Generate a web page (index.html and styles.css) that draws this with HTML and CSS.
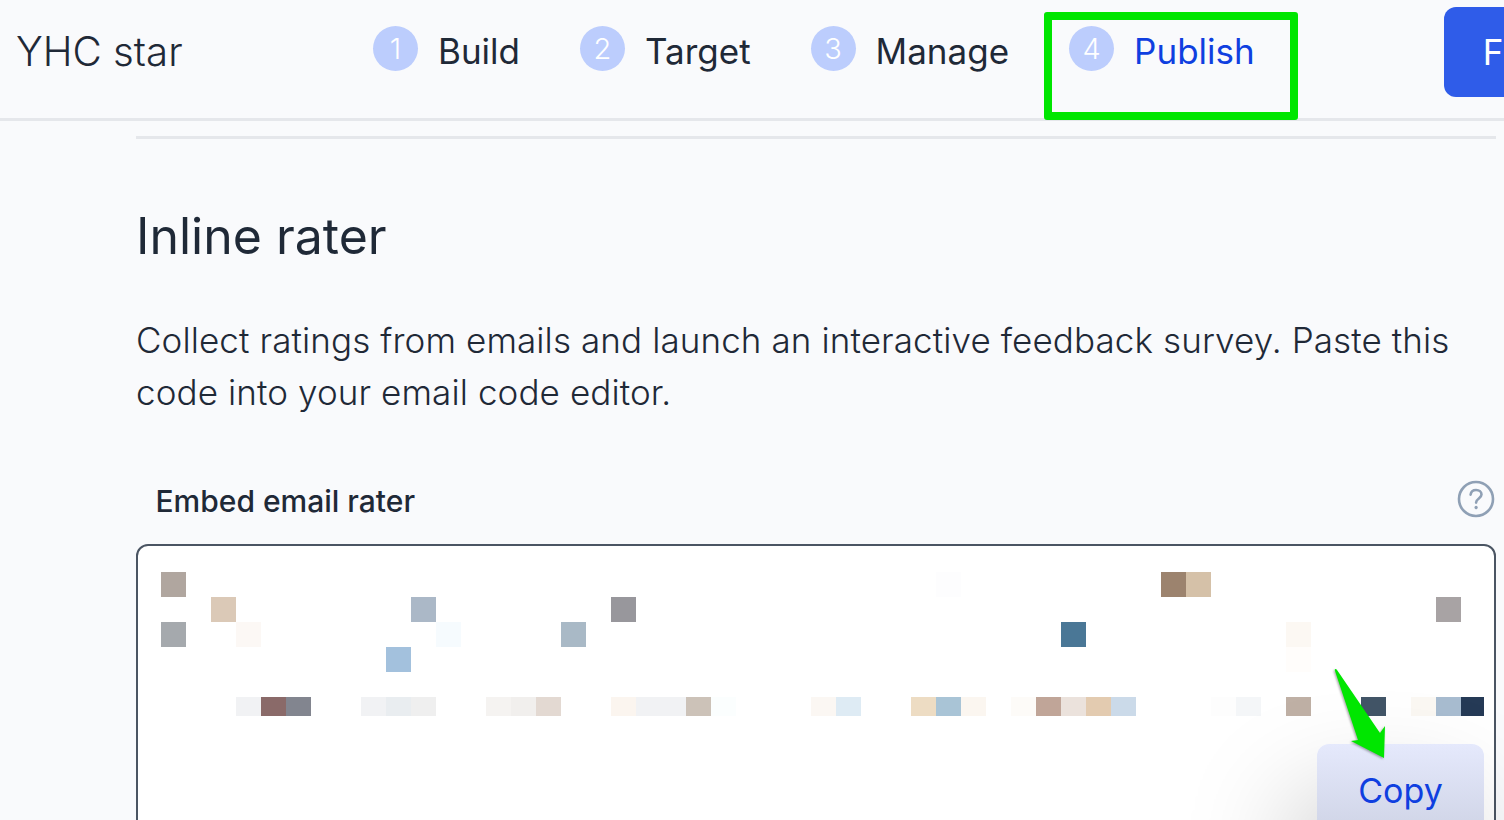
FILE: index.html
```html
<!DOCTYPE html>
<html lang="en">
<head>
<meta charset="utf-8">
<title>Inline rater</title>
<link rel="stylesheet" href="styles.css">
</head>
<body>
<header class="topbar">
  <div class="survey-name">YHC star</div>
  <nav class="steps">
    <a class="step"><span class="step-num">1</span><span class="step-label">Build</span></a>
    <a class="step"><span class="step-num">2</span><span class="step-label">Target</span></a>
    <a class="step"><span class="step-num">3</span><span class="step-label">Manage</span></a>
    <a class="step step-active"><span class="step-num">4</span><span class="step-label">Publish</span></a>
  </nav>
  <button class="finish">F</button>
</header>
<div class="highlight-box"></div>
<main class="content">
  <div class="rule"></div>
  <h1 class="title">Inline rater</h1>
  <p class="desc">Collect ratings from emails and launch an interactive feedback survey. Paste this code into your email code editor.</p>
  <div class="field-head">
    <span class="field-label">Embed email rater</span>
    <svg class="help" width="38" height="38" viewBox="0 0 38 38" fill="none" stroke="#8fa0b5" stroke-width="2.6" stroke-linecap="round" stroke-linejoin="round"><circle cx="19" cy="19" r="17"/><path d="M13.6 14.6c.4-3 2.700-4.600 5.500-4.600 3.100 0 5.400 1.900 5.400 4.600 0 3.800-5.400 4-5.400 8"/><path d="M19.100 27.400v.2" stroke-width="3.200"/></svg>
  </div>
  <div class="code-box">
    <div class="mosaic">
      <i style="grid-area:1/1;background:#b0a69f"></i>
      <i style="grid-area:1/32;background:#fdfdfe"></i>
      <i style="grid-area:1/41;background:#9c836e"></i>
      <i style="grid-area:1/42;background:#d5c1a8"></i>
      <i style="grid-area:2/3;background:#dbc9b7"></i>
      <i style="grid-area:2/11;background:#abb8c7"></i>
      <i style="grid-area:2/19;background:#98979c"></i>
      <i style="grid-area:2/52;background:#a8a3a4"></i>
      <i style="grid-area:3/1;background:#a5a9ad"></i>
      <i style="grid-area:3/4;background:#fcf8f5"></i>
      <i style="grid-area:3/12;background:#f6fbfe"></i>
      <i style="grid-area:3/17;background:#a9b9c6"></i>
      <i style="grid-area:3/37;background:#4a7796"></i>
      <i style="grid-area:3/46;background:#fcf8f3"></i>
      <i style="grid-area:4/10;background:#a3c1dd"></i>
      <i style="grid-area:4/46;background:#fffdfb"></i>
      <i style="grid-area:6/4;background:#f1f2f4"></i>
      <i style="grid-area:6/5;background:#8a6a69"></i>
      <i style="grid-area:6/6;background:#82858f"></i>
      <i style="grid-area:6/9;background:#f1f2f4"></i>
      <i style="grid-area:6/10;background:#e9edf0"></i>
      <i style="grid-area:6/11;background:#efefef"></i>
      <i style="grid-area:6/14;background:#f5f3f1"></i>
      <i style="grid-area:6/15;background:#f1efed"></i>
      <i style="grid-area:6/16;background:#e3d9d2"></i>
      <i style="grid-area:6/19;background:#fbf5ef"></i>
      <i style="grid-area:6/20;background:#f1f2f4"></i>
      <i style="grid-area:6/21;background:#f1f2f4"></i>
      <i style="grid-area:6/22;background:#ccc2b8"></i>
      <i style="grid-area:6/23;background:#fbfefe"></i>
      <i style="grid-area:6/27;background:#fbf7f3"></i>
      <i style="grid-area:6/28;background:#deebf4"></i>
      <i style="grid-area:6/31;background:#eddcc3"></i>
      <i style="grid-area:6/32;background:#a9c4d6"></i>
      <i style="grid-area:6/33;background:#fbf6f0"></i>
      <i style="grid-area:6/35;background:#fdfbf8"></i>
      <i style="grid-area:6/36;background:#c0a598"></i>
      <i style="grid-area:6/37;background:#ebe2dc"></i>
      <i style="grid-area:6/38;background:#e3cbb0"></i>
      <i style="grid-area:6/39;background:#cbdae9"></i>
      <i style="grid-area:6/43;background:#fdfdfd"></i>
      <i style="grid-area:6/44;background:#f4f6f8"></i>
      <i style="grid-area:6/46;background:#bfb0a5"></i>
      <i style="grid-area:6/49;background:#425567"></i>
      <i style="grid-area:6/51;background:#fbf8f3"></i>
      <i style="grid-area:6/52;background:#a8bcd0"></i>
      <i style="grid-area:6/53;background:#253a56"></i>
    </div>
    <div class="actions"><button class="copy">Copy</button></div>
  </div>
</main>
<svg class="arrow" width="60" height="100" viewBox="0 0 60 100"><path d="M6 3C5 1 3 2 4 4L27 73 20 74 53 91 54 59 49 66Z" fill="#00e600"/></svg>
</body>
</html>
```
FILE: styles.css
```css
* { box-sizing: border-box; }
html, body { margin: 0; height: 820px; overflow: hidden; }
body {
  position: relative;
  background: #f9fafc;
  color: #1f2937;
  font-family: Inter, "Liberation Sans", sans-serif;
}
.topbar {
  display: flex;
  align-items: flex-start;
  height: 121px;
  padding-left: 16px;
  border-bottom: 3px solid #e5e7eb;
}
.survey-name {
  flex: none;
  width: 167px;
  margin-top: 28px;
  font-size: 40.2px;
  line-height: 48px;
  font-weight: 300;
  color: #1f2937;
  white-space: nowrap;
}
.steps {
  display: flex;
  gap: 60px;
  flex: none;
  margin-left: 190px;
  margin-top: 26px;
}
.step {
  display: flex;
  align-items: flex-start;
  gap: 20px;
}
.step-num {
  display: flex;
  align-items: center;
  justify-content: center;
  width: 45px;
  height: 45px;
  border-radius: 50%;
  background: #bccdfd;
  color: #fff;
  font-size: 29px;
  font-weight: 300;
}
.step-label {
  font-size: 35px;
  line-height: 50px;
  white-space: nowrap;
}
.step-active .step-label { color: #0f3fe0; }
.finish {
  flex: none;
  width: 60px;
  height: 90px;
  margin-top: 7px;
  margin-left: 189px;
  padding: 0 0 0 39px;
  border: 0;
  border-radius: 12px 0 0 12px;
  background: #2f5ce9;
  color: #fff;
  font: 400 35px Inter, "Liberation Sans", sans-serif;
  text-align: left;
}
.highlight-box {
  position: absolute;
  left: 1044px;
  top: 12px;
  width: 254px;
  height: 108px;
  border: 8px solid #00e600;
  border-radius: 3px;
}
.content {
  padding: 15px 8px 0 136px;
}
.rule {
  height: 3px;
  background: #e5e7eb;
}
.title {
  margin: 67px 0 0;
  font-size: 50px;
  line-height: 60px;
  font-weight: 400;
}
.desc {
  margin: 48px 0 0;
  font-size: 35px;
  letter-spacing: .1px;
  line-height: 52px;
  font-weight: 300;
  color: #1f2937;
}
.field-head {
  display: flex;
  align-items: center;
  justify-content: space-between;
  height: 40px;
  margin-top: 63px;
  padding-left: 19.5px;
}
.field-label {
  font-size: 30px;
  font-weight: 500;
}
.help { margin: 0 1px 4px 0; }
.code-box {
  height: 400px;
  margin-top: 23px;
  padding: 26px 10px 0 23px;
  border: 2.5px solid #4b5563;
  border-radius: 12px;
  background: #fff;
}
.mosaic {
  display: grid;
  grid-template-columns: repeat(52, 25px) 23px;
  grid-template-rows: repeat(5, 25px) 19px;
}
.actions {
  display: flex;
  justify-content: flex-end;
  margin-top: 28px;
}
.copy {
  width: 167px;
  height: 100px;
  padding: 0 0 8px;
  border: 0;
  border-radius: 12px;
  background: linear-gradient(#e5e9fc, #ccd1e3);
  box-shadow: -20px 60px 110px rgba(0,0,0,.25);
  color: #0f3fe0;
  font: 400 34px Inter, "Liberation Sans", sans-serif;
}
.arrow {
  position: absolute;
  left: 1331px;
  top: 667px;
  filter: drop-shadow(-1px 1px 1px rgba(0,0,0,.35));
}
```
